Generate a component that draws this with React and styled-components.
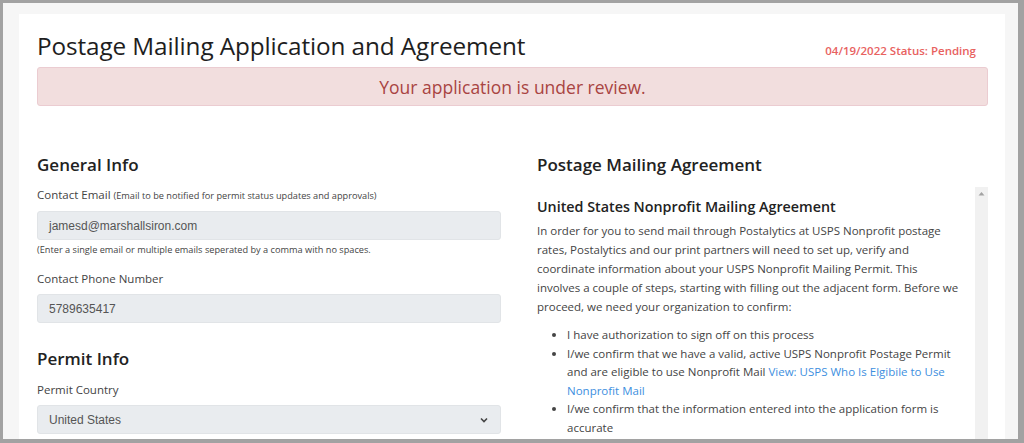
import React from "react";
import styled, { createGlobalStyle } from "styled-components";

const Global = createGlobalStyle`
  html, body {
    margin: 0;
    background: #a2a2a2;
    overflow: hidden;
  }
  * { box-sizing: border-box; }
`;

const Frame = styled.div`
  margin: 3px 6px 0 3px;
  height: 436px;
  background: #f6f6f6;
  padding: 11px 13px 0 16px;
  overflow: hidden;
  font-family: "Open Sans", "Noto Sans", sans-serif;
  color: #333;
`;

const Card = styled.div`
  background: #fff;
  height: 100%;
  padding: 16px 17px 0 18px;
`;

const TitleRow = styled.div`
  display: flex;
  justify-content: space-between;
  align-items: flex-end;
  padding-right: 12px;
`;

const Title = styled.h1`
  margin: 0;
  font-size: 24.3px;
  font-weight: 400;
  line-height: 32px;
  color: #1e1e1e;
  letter-spacing: -0.1px;
`;

const Status = styled.span`
  font-size: 11.5px;
  font-weight: 600;
  color: #e8625f;
  padding-bottom: 4px;
`;

const Alert = styled.div`
  margin-top: 5px;
  height: 39px;
  display: flex;
  align-items: center;
  justify-content: center;
  background: #f2dede;
  border: 1px solid #ebccd1;
  border-radius: 3px;
  color: #a94442;
  font-size: 17.5px;
`;

const Columns = styled.div`
  display: grid;
  grid-template-columns: 464px 451px;
  column-gap: 36px;
  margin-top: 46px;
`;

const Column = styled.div`
  display: flex;
  flex-direction: column;
`;

const SectionTitle = styled.h2`
  margin: 0 0 ${(p) => p.$gap || 9}px;
  font-size: 17px;
  font-weight: 600;
  line-height: 26px;
  color: #222;
`;

const Label = styled.label`
  display: block;
  font-size: 11.5px;
  line-height: 17px;
  color: #444;
  margin-bottom: 7px;
`;

const LabelNote = styled.span`
  font-size: 9.2px;
`;

const Field = styled.div`
  height: 29px;
  display: flex;
  align-items: center;
  justify-content: space-between;
  padding: 0 11px;
  background: #e9ecef;
  border: 1px solid #e1e4e7;
  border-radius: 3px;
  font-family: "Liberation Sans", Arial, sans-serif;
  font-size: 12px;
  color: #555;
  margin-bottom: ${(p) => p.$gap || 0}px;
`;

const Help = styled.div`
  font-size: 9.2px;
  line-height: 14px;
  color: #444;
  margin: 3px 0 13px;
`;

const ScrollBox = styled.div`
  display: flex;
  height: 260px;
`;

const ScrollContent = styled.div`
  flex: 1;
  padding: 10px 0 0 0;
`;

const Track = styled.div`
  width: 13px;
  background: #f1f1f1;
  display: flex;
  justify-content: center;
  padding-top: 4px;
`;

const SubTitle = styled.h3`
  margin: 0 0 4px;
  font-size: 14.3px;
  font-weight: 600;
  line-height: 20px;
  color: #222;
`;

const Para = styled.p`
  margin: 0 0 10px;
  font-size: 11.5px;
  line-height: 19px;
  color: #444;
  white-space: nowrap;
`;

const List = styled.ul`
  margin: 0;
  padding-left: 30px;
  padding-right: 12px;
  font-size: 11.5px;
  line-height: 18.5px;
  color: #444;
`;

const Link = styled.a`
  color: #3d8fe0;
  text-decoration: none;
`;

export default function App() {
  return (
    <>
      <Global />
      <Frame>
        <Card>
          <TitleRow>
            <Title>Postage Mailing Application and Agreement</Title>
            <Status>04/19/2022 Status: Pending</Status>
          </TitleRow>
          <Alert>Your application is under review.</Alert>
          <Columns>
            <Column>
              <SectionTitle $gap={8}>General Info</SectionTitle>
              <Label>
                Contact Email{" "}
                <LabelNote>(Email to be notified for permit status updates and approvals)</LabelNote>
              </Label>
              <Field>jamesd@marshallsiron.com</Field>
              <Help>(Enter a single email or multiple emails seperated by a comma with no spaces.</Help>
              <Label>Contact Phone Number</Label>
              <Field $gap={23}>5789635417</Field>
              <SectionTitle>Permit Info</SectionTitle>
              <Label>Permit Country</Label>
              <Field>
                United States
                <svg width="10" height="10" viewBox="0 0 10 10">
                  <path d="M2 3.5 L5 6.5 L8 3.5" fill="none" stroke="#444" strokeWidth="1.6" />
                </svg>
              </Field>
            </Column>
            <Column>
              <SectionTitle $gap={9}>Postage Mailing Agreement</SectionTitle>
              <ScrollBox>
                <ScrollContent>
                  <SubTitle>United States Nonprofit Mailing Agreement</SubTitle>
                  <Para>
                    In order for you to send mail through Postalytics at USPS Nonprofit postage
                    <br />
                    rates, Postalytics and our print partners will need to set up, verify and
                    <br />
                    coordinate information about your USPS Nonprofit Mailing Permit. This
                    <br />
                    involves a couple of steps, starting with filling out the adjacent form. Before we
                    <br />
                    proceed, we need your organization to confirm:
                  </Para>
                  <List>
                    <li>I have authorization to sign off on this process</li>
                    <li>
                      I/we confirm that we have a valid, active USPS Nonprofit Postage Permit and are
                      eligible to use Nonprofit Mail{" "}
                      <Link href="#">View: USPS Who Is Elgibile to Use Nonprofit Mail</Link>
                    </li>
                    <li>I/we confirm that the information entered into the application form is accurate</li>
                  </List>
                </ScrollContent>
                <Track>
                  <svg width="7" height="5" viewBox="0 0 7 5">
                    <path d="M0.5 4.5 L3.5 1 L6.5 4.5 Z" fill="#a3a3a3" />
                  </svg>
                </Track>
              </ScrollBox>
            </Column>
          </Columns>
        </Card>
      </Frame>
    </>
  );
}
